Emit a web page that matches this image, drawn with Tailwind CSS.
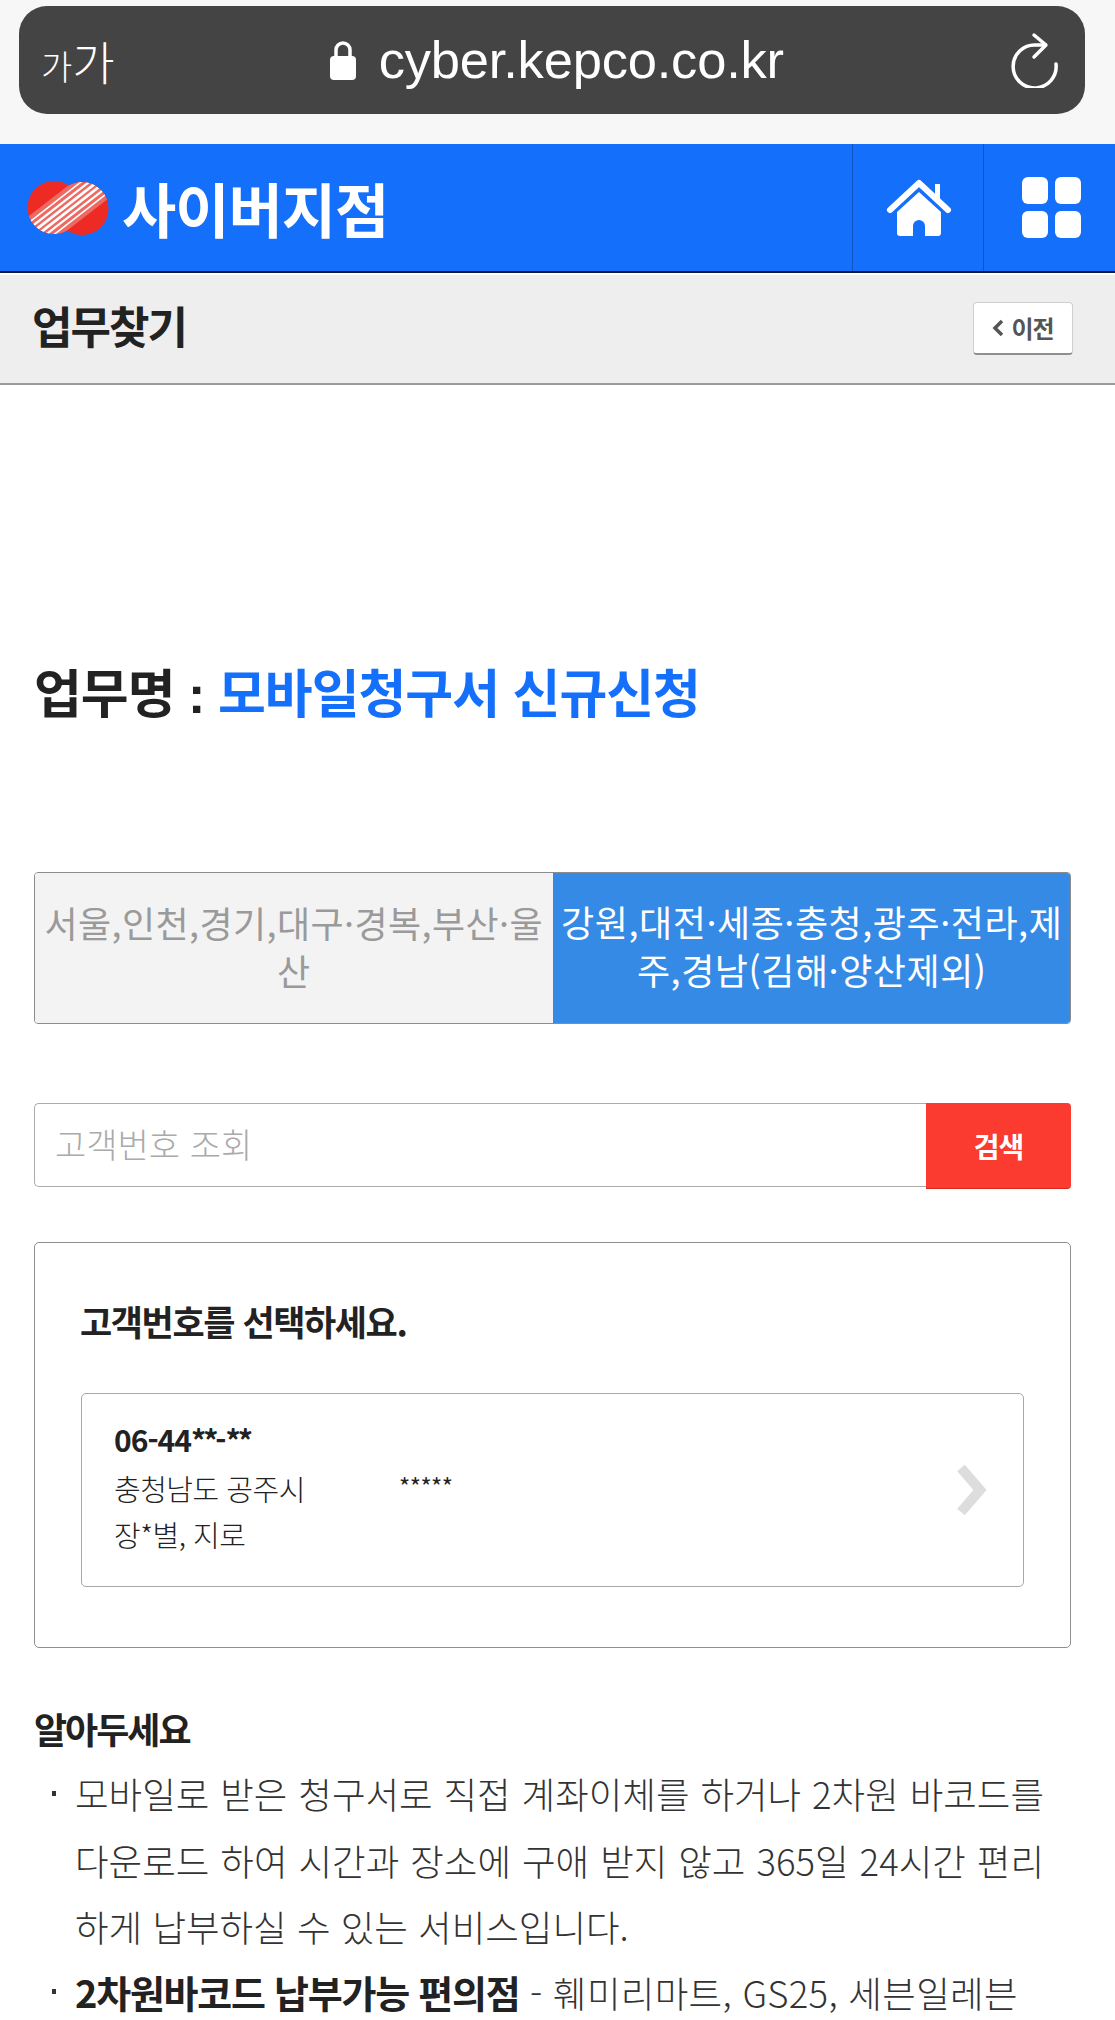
<!DOCTYPE html>
<html lang="ko">
<head>
    <meta charset="UTF-8">
    <meta name="viewport" content="width=device-width, initial-scale=1.0">
    <title>업무찾기 | 사이버지점</title>
    <script src="https://cdn.jsdelivr.net/npm/@tailwindcss/browser@4"></script>
</head>
<body class="bg-white font-['Noto_Sans_CJK_KR','Noto_Sans',sans-serif] text-[#222]">
<div class="h-[2020px] overflow-hidden">
    <!-- Browser bar -->
    <div class="h-[144px] bg-[#f7f7f7] pt-[6px] px-[19px]">
        <div class="h-[108px] w-[1066px] rounded-[28px] bg-[#444444] flex items-center justify-between pl-[22px] pr-[27px] text-white">
            <span class="flex items-end font-light leading-none"><span class="text-[34px]">가</span><span class="text-[46px]">가</span></span>
            <div class="flex items-center gap-[22px] mr-[12px]">
                <svg class="w-[28px] h-[42px]" viewBox="0 0 28 42"><path d="M7 18v-7a7 7 0 0 1 14 0v7" fill="none" stroke="white" stroke-width="3.5"/><rect x="1" y="17" width="26" height="24" rx="4" fill="white"/></svg>
                <span class="font-['Liberation_Sans'] text-[52.5px] leading-none tracking-[-0.2px]">cyber.kepco.co.kr</span>
            </div>
            <svg class="w-[48px] h-[56px]" viewBox="0 0 48 56" fill="none" stroke="white" stroke-width="3.5" stroke-linecap="round" stroke-linejoin="round"><path d="M35 13H26A21.5 21.5 0 1 0 46 32"/><path d="M24 3l12 10-12 12"/></svg>
        </div>
    </div>

    <!-- Site header -->
    <header class="h-[129px] bg-[#146ffb] border-b-2 border-[#0b1b40] flex items-stretch">
        <div class="flex-1 flex items-center pl-[27px] gap-[13px]">
            <svg class="w-[82px] h-[54px]" viewBox="0 0 82 54">
                <defs>
                    <clipPath id="logoCircles"><circle cx="27" cy="26.5" r="26.5"/><circle cx="55" cy="27.5" r="26.5"/></clipPath>
                </defs>
                <circle cx="27" cy="26.5" r="26.5" fill="#ee2a24"/>
                <circle cx="55" cy="27.5" r="26.5" fill="#ee2a24"/>
                <g clip-path="url(#logoCircles)">
                    <polygon points="-18,50.6 67,-15.5 103,0.8 3.4,78" fill="#ec6a62"/>
                    <g fill="none" stroke="#fff">
                        <path stroke-width="1.6" d="M-15 54.6L70-11.5"/>
                        <path stroke-width="2.2" d="M-12 58.6L73-7.5"/>
                        <path stroke-width="2.8" d="M-9 62.6L76-3.5"/>
                        <path stroke-width="2.8" d="M-6 66.6L79 .5"/>
                        <path stroke-width="2.2" d="M-3 70.6L82 4.5"/>
                        <path stroke-width="1.6" d="M0 74.6L85 8.5"/>
                    </g>
                </g>
            </svg>
            <span class="text-[59px] leading-none font-bold text-white tracking-[-1px]">사이버지점</span>
        </div>
        <a class="w-[131px] pl-[2px] border-l border-[#0e56c4] flex items-center justify-center">
            <svg class="w-[68px] h-[60px]" viewBox="0 0 68 60" fill="white">
                <path d="M50 6h5v16h-5z"/>
                <path d="M5 32L34 5l29 27" fill="none" stroke="white" stroke-width="6" stroke-linecap="round" stroke-linejoin="round"/>
                <path fill-rule="evenodd" d="M34 14L56 34V55a3 3 0 0 1-3 3H15a3 3 0 0 1-3-3V34ZM28 58h12V48a6 6 0 0 0-12 0Z"/>
            </svg>
        </a>
        <a class="w-[132px] pl-[4px] border-l border-[#0e56c4] flex items-center justify-center">
            <div class="grid grid-cols-2 gap-[7px]">
                <span class="w-[26px] h-[27px] rounded-[6px] bg-white"></span>
                <span class="w-[26px] h-[27px] rounded-[6px] bg-white"></span>
                <span class="w-[26px] h-[27px] rounded-[6px] bg-white"></span>
                <span class="w-[26px] h-[27px] rounded-[6px] bg-white"></span>
            </div>
        </a>
    </header>

    <!-- Page title -->
    <div class="h-[110px] mt-[2px] bg-[#eeeeee] border-b-2 border-[#9b9b9b] flex items-center justify-between pl-[32px] pr-[42px]">
        <h2 class="text-[44px] mb-[8px] font-bold tracking-[-2px] text-[#222] leading-none">업무찾기</h2>
        <button class="w-[100px] h-[53px] mb-[2px] bg-white border border-[#cfcfcf] border-b-2 border-b-[#8f8f8f] rounded-[4px] flex items-center justify-center gap-[7px] text-[#555] text-[24px] font-bold tracking-[-1px]">
            <svg class="w-[12px] h-[18px]" viewBox="0 0 12 18" fill="none" stroke="#555" stroke-width="3.5"><path d="M10 2L3 9l7 7"/></svg>
            <span>이전</span>
        </button>
    </div>

    <main class="px-[34px] pr-[44px]">
        <h1 class="mt-[280px] text-[52px] font-bold tracking-[-1px] leading-none whitespace-nowrap h-[52px]">업무명 <span class="font-['Liberation_Sans']">:</span> <span class="text-[#146ffb]">모바일청구서 신규신청</span></h1>

        <!-- Region tabs -->
        <div class="mt-[155px] h-[152px] grid grid-cols-2 rounded-[4px] overflow-hidden border border-[#8c8c8c] text-[36px] leading-[48px] text-center">
            <div class="bg-[#f3f3f3] text-[#9a9a9a] pt-[25px] px-[8px] tracking-[0.4px]">서울,인천,경기,대구·경복,부산·울산</div>
            <div class="bg-[#358ae6] text-white pt-[25px] px-[4px] -my-px -mr-px tracking-[0.55px]">강원,대전·세종·충청,광주·전라,제주,경남(김해·양산제외)</div>
        </div>

        <!-- Search -->
        <div class="mt-[79px] flex items-start">
            <div class="flex-1 h-[84px] border border-[#ababab] border-r-0 rounded-l-[5px] pl-[20px] pb-[4px] flex items-center text-[34px] font-light text-[#aaaaaa]">고객번호 조회</div>
            <button class="w-[145px] h-[86px] bg-[#fb3a30] border-b border-[#d4281f] rounded-r-[4px] text-white text-[28px] font-bold tracking-[-1px]">검색</button>
        </div>

        <!-- Customer selection -->
        <div class="mt-[53px] h-[406px] border border-[#8f8f8f] rounded-[5px] pt-[54px] pl-[45px] pr-[46px]">
            <h3 class="text-[35px] font-bold tracking-[-1.4px] leading-[48px] text-[#222]">고객번호를 선택하세요.</h3>
            <div class="mt-[48px] ml-[1px] h-[194px] border border-[#a8a8a8] rounded-[5px] pl-[32px] pr-[36px] flex items-center justify-between">
                <div class="mb-[6px]">
                    <div class="text-[30px] font-bold leading-[44px] tracking-[-1px] mb-[4px]">06-44<span class="tracking-[-3px]">**</span>-<span class="tracking-[-3px]">**</span></div>
                    <div class="flex text-[29px] font-light leading-[46px] tracking-[-0.5px]">
                        <span class="w-[285px]">충청남도 공주시</span>
                        <span class="text-[24px] leading-[42px] font-normal">*****</span>
                    </div>
                    <div class="text-[29px] font-light leading-[46px] tracking-[-0.5px]">장*별, 지로</div>
                </div>
                <svg class="w-[32px] h-[50px]" viewBox="0 0 32 50" fill="none" stroke="#dddddd" stroke-width="10"><path d="M6 3l19 22L6 47"/></svg>
            </div>
        </div>

        <!-- Notes -->
        <h3 class="mt-[56px] text-[36px] font-bold tracking-[-2px] leading-[48px] text-[#222]">알아두세요</h3>
        <ul class="mt-[9px] w-[1010px] text-[36.5px] font-light text-[#333] leading-[66.5px] text-justify">
            <li class="relative pl-[41px] before:content-[''] before:absolute before:left-[18px] before:top-[30px] before:w-[4px] before:h-[5px] before:bg-[#333]">모바일로 받은 청구서로 직접 계좌이체를 하거나 2차원 바코드를 다운로드 하여 시간과 장소에 구애 받지 않고 365일 24시간 편리하게 납부하실 수 있는 서비스입니다.</li>
            <li class="relative -mt-[2px] pl-[41px] tracking-[0.3px] before:content-[''] before:absolute before:left-[18px] before:top-[30px] before:w-[4px] before:h-[5px] before:bg-[#333]"><b class="text-[38px] font-bold tracking-[-1.25px] text-[#222]">2차원바코드 납부가능 편의점</b> - 훼미리마트, GS25, 세븐일레븐</li>
        </ul>
    </main>
</div>
</body>
</html>
